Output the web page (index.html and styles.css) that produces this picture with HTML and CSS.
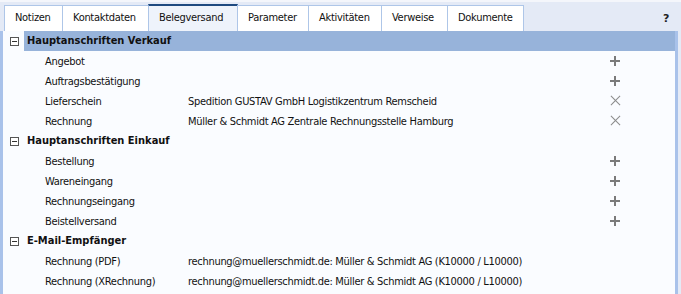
FILE: index.html
```html
<!DOCTYPE html>
<html lang="de">
<head>
<meta charset="utf-8">
<link rel="stylesheet" href="styles.css">
</head>
<body>
<div class="app">
  <div class="tabbar">
    <div class="tabs">
      <div class="tab">Notizen</div>
      <div class="tab">Kontaktdaten</div>
      <div class="tab active">Belegversand</div>
      <div class="tab">Parameter</div>
      <div class="tab">Aktivitäten</div>
      <div class="tab">Verweise</div>
      <div class="tab">Dokumente</div>
    </div>
    <div class="help">?</div>
  </div>
  <div class="panel">
    <div class="group">
      <span class="toggle"><span class="box"></span></span>
      <span class="gtitle">Hauptanschriften Verkauf</span>
    </div>
    <div class="row"><span class="label">Angebot</span><span class="value"></span><span class="act plus"></span></div>
    <div class="row"><span class="label">Auftragsbestätigung</span><span class="value"></span><span class="act plus"></span></div>
    <div class="row"><span class="label">Lieferschein</span><span class="value">Spedition GUSTAV GmbH Logistikzentrum Remscheid</span><span class="act del"></span></div>
    <div class="row"><span class="label">Rechnung</span><span class="value">Müller &amp; Schmidt AG Zentrale Rechnungsstelle Hamburg</span><span class="act del"></span></div>
    <div class="group plain">
      <span class="toggle"><span class="box"></span></span>
      <span class="gtitle">Hauptanschriften Einkauf</span>
    </div>
    <div class="row"><span class="label">Bestellung</span><span class="value"></span><span class="act plus"></span></div>
    <div class="row"><span class="label">Wareneingang</span><span class="value"></span><span class="act plus"></span></div>
    <div class="row"><span class="label">Rechnungseingang</span><span class="value"></span><span class="act plus"></span></div>
    <div class="row"><span class="label">Beistellversand</span><span class="value"></span><span class="act plus"></span></div>
    <div class="group plain">
      <span class="toggle"><span class="box"></span></span>
      <span class="gtitle">E-Mail-Empfänger</span>
    </div>
    <div class="row"><span class="label">Rechnung (PDF)</span><span class="value">rechnung@muellerschmidt.de: Müller &amp; Schmidt AG (K10000 / L10000)</span><span class="act"></span></div>
    <div class="row"><span class="label">Rechnung (XRechnung)</span><span class="value">rechnung@muellerschmidt.de: Müller &amp; Schmidt AG (K10000 / L10000)</span><span class="act"></span></div>
  </div>
</div>
</body>
</html>
```
FILE: styles.css
```css
* { box-sizing: border-box; }
html, body { margin: 0; padding: 0; }
body {
  width: 681px;
  height: 294px;
  overflow: hidden;
  background: #e4eaf6;
  font-family: "DejaVu Sans Condensed", "DejaVu Sans", sans-serif;
  font-size: 11px;
  letter-spacing: -0.3px;
  color: #111;
}
.app { width: 681px; height: 294px; border-top: 2px solid #f4f6fb; }
.tabbar {
  height: 29px;
  display: flex;
  align-items: flex-end;
  justify-content: space-between;
  padding-left: 4px;
}
.tabs { display: flex; align-items: flex-end; }
.tab {
  height: 26px;
  line-height: 24px;
  padding-left: 10px;
  background: #ffffff;
  border: 1px solid #aec6e8;
  border-bottom: none;
  margin-right: -1px;
  white-space: nowrap;
}
.tab:nth-child(1) { width: 59px; }
.tab:nth-child(2) { width: 87px; }
.tab:nth-child(3) { width: 90px; }
.tab:nth-child(4) { width: 72px; }
.tab:nth-child(5) { width: 74px; }
.tab:nth-child(6) { width: 67px; }
.tab:nth-child(7) { width: 77px; }
.tab.active {
  height: 27px;
  background: #eef3fb;
  border-top: 2px solid #1e4a80;
  line-height: 24px;
}
.help {
  align-self: center;
  font-family: "DejaVu Sans", sans-serif;
  font-weight: bold;
  font-size: 11px;
  color: #222;
  margin-right: 12px;
  margin-top: 4px;
}
.panel {
  width: 678px;
  height: 263px;
  background: #fafcff;
  border-left: 3px solid #a9c2ea;
  border-right: 3px solid #a9c2ea;
}
.group {
  height: 20px;
  display: flex;
  align-items: center;
  font-weight: bold;
  letter-spacing: 0;
  color: #111;
}
.toggle {
  width: 21px;
  height: 20px;
  display: flex;
  align-items: center;
  justify-content: center;
  background: #fafcff;
  padding-left: 2px;
}
.gtitle {
  flex: 1;
  height: 20px;
  line-height: 20px;
  padding-left: 3px;
}
.group:first-child .gtitle { background: #97b3da; }
.box {
  width: 9px;
  height: 9px;
  border: 1px solid #555;
  background: #fff;
  position: relative;
}
.box::after {
  content: "";
  position: absolute;
  left: 1px;
  top: 3px;
  width: 5px;
  height: 1px;
  background: #333;
}
.row {
  height: 20px;
  display: flex;
  align-items: center;
}
.label { width: 185px; padding-left: 42px; white-space: nowrap; }
.value { width: 421px; white-space: nowrap; }
.act { width: 12px; height: 12px; position: relative; }
.plus::before, .plus::after {
  content: "";
  position: absolute;
  background: #7a7a7a;
}
.plus::before { left: 1px; top: 5px; width: 10px; height: 2px; }
.plus::after { left: 5px; top: 1px; width: 2px; height: 10px; }
.del::before, .del::after {
  content: "";
  position: absolute;
  left: 0;
  top: 5px;
  width: 13px;
  height: 1px;
  background: #8a8a8a;
}
.del::before { transform: rotate(45deg); }
.del::after { transform: rotate(-45deg); }
```
